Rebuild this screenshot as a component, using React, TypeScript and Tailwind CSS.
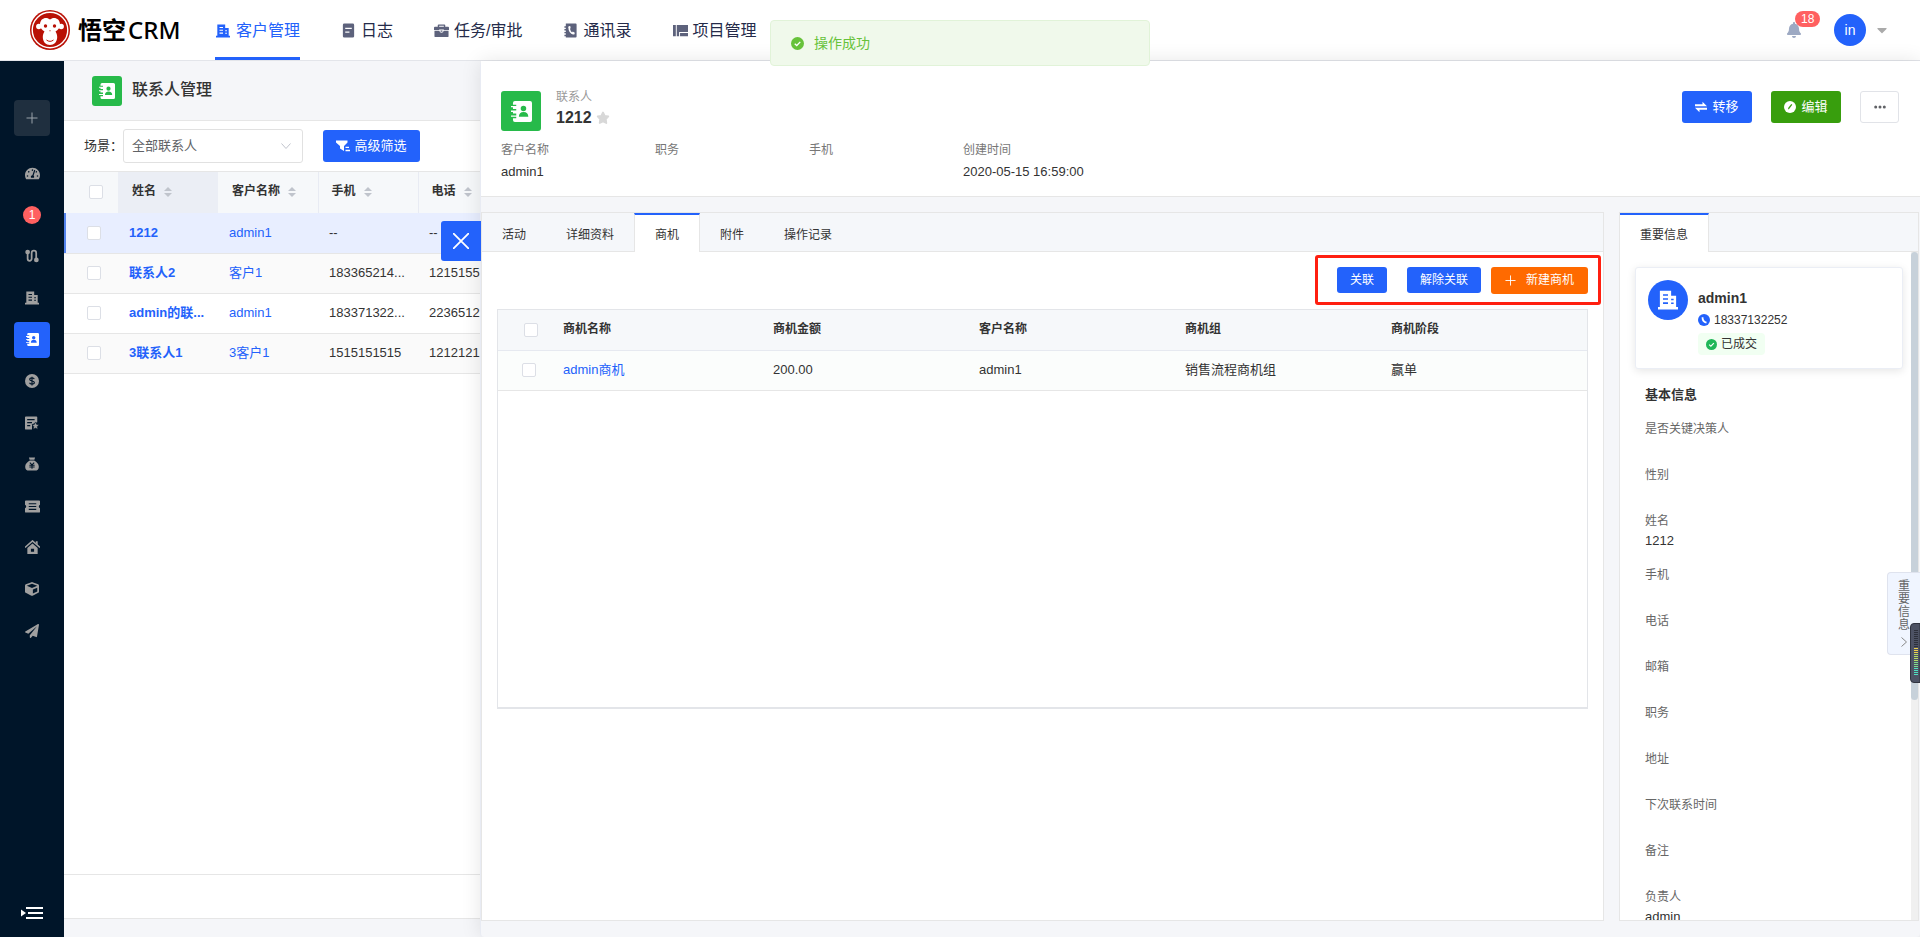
import { useState } from 'react'
import type { ReactNode } from 'react'
import { FaBell, FaCaretDown, FaCube, FaPaperPlane, FaTachometerAlt } from 'react-icons/fa'

type IconProps = { className?: string }

const checkboxClass =
  'block size-[14px] appearance-none rounded-[2px] border border-[#dcdfe6] bg-white checked:border-[#2362fb] checked:bg-[#2362fb]'

function BuildingIcon({ className }: IconProps) {
  return (
    <svg viewBox="0 0 16 16" className={className} fill="currentColor" aria-hidden="true">
      <path
        fillRule="evenodd"
        d="M1.500 0.500h9v4h4v9H16V15.500H0v-2h1.500zM4 3.300v1.300h4V3.300zm0 3.200v1.300h4V6.500zM4 9.800v1.300h4V9.800zm6.500-2.800v1.200h2V7zm0 3v1.200h2V10z"
      />
    </svg>
  )
}

function ContactIcon({ className }: IconProps) {
  return (
    <svg viewBox="0 0 16 16" className={className} fill="currentColor" aria-hidden="true">
      <path
        fillRule="evenodd"
        d="M3 0h11.500A1.500 1.500 0 0 1 16 1.500v13a1.500 1.500 0 0 1-1.500 1.500H3a1.500 1.500 0 0 1-1.500-1.500V13.200H4V12H0v-1h4V9.600H1.500V8.300H0v-1h4V6H1.500V4.800H0v-1h4V2.800H1.500V1.500A1.500 1.500 0 0 1 3 0zm6.500 3.600a2.100 2.100 0 1 0 0 4.200 2.100 2.100 0 0 0 0-4.200zM6 12h7.200c0-2.200-1.300-3.600-3.600-3.600S6 9.800 6 12z"
      />
    </svg>
  )
}

function LogIcon({ className }: IconProps) {
  return (
    <svg viewBox="0 0 16 16" className={className} fill="currentColor" aria-hidden="true">
      <path
        fillRule="evenodd"
        d="M3.500.5h9A1.500 1.500 0 0 1 14 2v12a1.500 1.500 0 0 1-1.500 1.500h-9A1.500 1.500 0 0 1 2 14V2A1.500 1.500 0 0 1 3.500.5zM4.500 5v1.400h7V5zm0 4v1.400h4.500V9z"
      />
    </svg>
  )
}

function BriefcaseIcon({ className }: IconProps) {
  return (
    <svg viewBox="0 0 16 16" className={className} fill="currentColor" aria-hidden="true">
      <path
        fillRule="evenodd"
        d="M5 1.500h6a1 1 0 0 1 1 1V4h3a1 1 0 0 1 1 1v2.500h-5.500V7h-5v.5H0V5a1 1 0 0 1 1-1h3V2.500a1 1 0 0 1 1-1zM5.500 3v1h5V3zM.5 8.300h5.200A2.500 2.500 0 0 0 8 10.500a2.500 2.500 0 0 0 2.300-2.200h5.200V14a1 1 0 0 1-1 1h-13a1 1 0 0 1-1-1zM7 8h2v1.300H7z"
      />
    </svg>
  )
}

function PhoneBookIcon({ className }: IconProps) {
  return (
    <svg viewBox="0 0 16 16" className={className} aria-hidden="true">
      <path
        fill="currentColor"
        d="M3 .5h10.500a1 1 0 0 1 1 1v13a1 1 0 0 1-1 1H3V14H1.500v-1.500H3V11H1.500V9.500H3V8H1.500V6.500H3V5H1.500V3.500H3z"
      />
      <path d="M6.500 4.200c0 4.300 1.500 6.600 5 7.600" stroke="white" strokeWidth="1.600" fill="none" />
      <path d="M5.800 3.500l1.900-.3.500 2.500-1.700.6zM9.500 10.300l.9-1.300 2.200 1.300-.5 1.900z" fill="white" />
    </svg>
  )
}

function ProjectIcon({ className }: IconProps) {
  return (
    <svg viewBox="0 0 16 16" className={className} fill="currentColor" aria-hidden="true">
      <path d="M0 2h3v12H0zM4 2h12v7.500H6.500V14H4zM7.500 10.700H16V14H7.500z" />
    </svg>
  )
}

function RouteIcon({ className }: IconProps) {
  return (
    <svg viewBox="0 0 16 16" className={className} aria-hidden="true">
      <path
        d="M3 4v7.200a2.300 2.300 0 0 0 4.600 0V4.500a2.600 2.600 0 0 1 5.200 0V12"
        fill="none"
        stroke="currentColor"
        strokeWidth="2"
      />
      <circle cx="3" cy="3.500" r="2.700" fill="currentColor" />
      <circle cx="13" cy="12.500" r="2.700" fill="currentColor" />
    </svg>
  )
}

function CoinIcon({ className }: IconProps) {
  return (
    <svg viewBox="0 0 16 16" className={className} aria-hidden="true">
      <circle cx="8" cy="8" r="8" fill="currentColor" />
      <path
        d="M10.600 5.800C10.300 4.900 9.300 4.500 8 4.500c-1.500 0-2.600.6-2.600 1.700C5.400 8.600 10.700 7.400 10.700 9.800c0 1.100-1.200 1.700-2.700 1.700s-2.500-.5-2.800-1.500M8 3v10"
        fill="none"
        stroke="#001529"
        strokeWidth="1.300"
      />
    </svg>
  )
}

function DocStarIcon({ className }: IconProps) {
  return (
    <svg viewBox="0 0 16 16" className={className} aria-hidden="true">
      <path d="M1 .5h12a1 1 0 0 1 1 1V7L8 9.500V15.500H1a1 1 0 0 1-1-1v-13a1 1 0 0 1 1-1z" fill="currentColor" />
      <path d="M2.500 4.200h8.500M2.500 7.500h5.500M2.500 11h3.500" stroke="#001529" strokeWidth="1.300" />
      <path
        d="M12 6.800l1.300 2.800 2.700.4-2 2 .5 3.200-2.500-1.400-2.500 1.400.5-3.200-2-2 2.700-.4z"
        fill="currentColor"
        stroke="#001529"
        strokeWidth="0.600"
      />
    </svg>
  )
}

function MoneyBagIcon({ className }: IconProps) {
  return (
    <svg viewBox="0 0 16 16" className={className} aria-hidden="true">
      <path
        d="M4.500.5h7l-.8 2.700H5.300zM5.500 4h5c3 1.700 5.300 4.200 5.300 7 0 3-1.800 4.500-4.300 4.500H4.500C2 15.500.2 14 .2 11c0-2.800 2.300-5.300 5.300-7z"
        fill="currentColor"
      />
      <path d="M5.500 6.500L8 9l2.500-2.500M8 9v4.500M5 9.500h6M5 11.500h6" fill="none" stroke="#001529" strokeWidth="1.200" />
    </svg>
  )
}

function TicketIcon({ className }: IconProps) {
  return (
    <svg viewBox="0 0 16 16" className={className} aria-hidden="true">
      <path
        d="M1 1.500h14a1 1 0 0 1 1 1v3.700a1.900 1.900 0 0 0 0 3.600v3.700a1 1 0 0 1-1 1H1a1 1 0 0 1-1-1V9.800a1.900 1.900 0 0 0 0-3.600V2.500a1 1 0 0 1 1-1z"
        fill="currentColor"
      />
      <path d="M4 5h8M4 8h8M4 11h8" stroke="#001529" strokeWidth="1.200" />
    </svg>
  )
}

function HomeIcon({ className }: IconProps) {
  return (
    <svg viewBox="0 0 16 16" className={className} aria-hidden="true">
      <path d="M0 8L8 1l8 7" fill="none" stroke="currentColor" strokeWidth="1.700" />
      <path d="M11.500 1.200h2V5l-2-1.700z" fill="currentColor" />
      <path
        fillRule="evenodd"
        d="M8 3.800l5.500 4.800V15h-11V8.600zM6.300 9.300v3.200h3.400V9.300z"
        fill="currentColor"
      />
    </svg>
  )
}

function TransferIcon({ className }: IconProps) {
  return (
    <svg viewBox="0 0 12 12" className={className} fill="currentColor" aria-hidden="true">
      <path d="M0 3.200h7.500V.8L12 5.200H0zM12 8.800H4.500v2.400L0 6.800h12z" />
    </svg>
  )
}

function StarIcon({ className }: IconProps) {
  return (
    <svg viewBox="0 0 14 14" className={className} aria-hidden="true">
      <path
        d="M7 1.500l1.700 3.300 3.600.6-2.500 2.700.5 3.900L7 10.500 3.700 12l.5-3.900L1.700 5.400l3.600-.6z"
        fill="currentColor"
        stroke="currentColor"
        strokeWidth="1.800"
        strokeLinejoin="round"
      />
    </svg>
  )
}

function PlusIcon({ className }: IconProps) {
  return (
    <svg viewBox="0 0 12 12" className={className} fill="none" stroke="currentColor" aria-hidden="true">
      <path d="M6 .5v11M.5 6h11" />
    </svg>
  )
}

function CheckCircle({ className }: IconProps) {
  return (
    <svg viewBox="0 0 14 14" className={className} aria-hidden="true">
      <circle cx="7" cy="7" r="7" fill="currentColor" />
      <path d="M4 7.200l2.200 2L10 5.200" fill="none" stroke="white" strokeWidth="1.400" />
    </svg>
  )
}

function MonkeyLogo() {
  return (
    <svg viewBox="0 0 40 40" className="size-10" aria-hidden="true">
      <circle cx="20" cy="20" r="20" fill="#b91106" />
      <circle cx="20" cy="20" r="17.800" fill="none" stroke="white" strokeWidth="1.400" />
      <circle cx="8.800" cy="16.500" r="2.700" fill="white" />
      <circle cx="31.200" cy="16.500" r="2.700" fill="white" />
      <path
        d="M20 9.500C17 6.500 10 7.500 10 14.500c0 3.500 2 5.500 4.500 7-1 1.500-1.700 3.500-1.700 5.500 0 5 3.200 8 7.200 8s7.200-3 7.200-8c0-2-.7-4-1.700-5.500 2.500-1.500 4.500-3.500 4.500-7C30 7.500 23 6.500 20 9.500z"
        fill="white"
      />
      <circle cx="15.500" cy="16" r="1.700" fill="#b91106" />
      <circle cx="24.500" cy="16" r="1.700" fill="#b91106" />
      <path d="M19 20.500h2l-1 1z" fill="#b91106" />
      <path d="M16.500 30c2 1.800 5 1.800 7 0" fill="none" stroke="#b91106" strokeWidth="1" />
    </svg>
  )
}

const navItems = [
  { label: '客户管理', icon: <BuildingIcon className="size-[14px]" />, active: true },
  { label: '日志', icon: <LogIcon className="size-[15px]" /> },
  { label: '任务/审批', icon: <BriefcaseIcon className="size-[15px]" /> },
  { label: '通讯录', icon: <PhoneBookIcon className="size-[15px]" /> },
  { label: '项目管理', icon: <ProjectIcon className="size-[15px]" /> },
]

function Header() {
  return (
    <header className="flex h-[61px] shrink-0 items-center border-b border-[#e3e5ea] bg-white">
      <a href="#" className="ml-[30px] flex w-[185px] items-center gap-2 text-black">
        <MonkeyLogo />
        <span className="flex items-center gap-[2px] font-['Noto_Sans','Noto_Sans_CJK_SC',sans-serif] text-2xl leading-8 font-medium">
          <b>悟空</b>CRM
        </span>
      </a>
      <nav className="flex h-full gap-[41px] text-base">
        {navItems.map((item) => (
          <a
            key={item.label}
            href="#"
            className={
              item.active
                ? 'flex items-center gap-[5px] border-b-[3px] border-[#2362fb] pt-1 text-[#2362fb]'
                : 'flex items-center gap-[5px] border-b-[3px] border-transparent pt-1 text-[#252b4a]'
            }
          >
            <span className={item.active ? 'flex w-4 justify-center' : 'text-[#5d627c]'}>{item.icon}</span>
            {item.label}
          </a>
        ))}
      </nav>
      <div className="ml-auto flex items-center pr-[30px]">
        <button type="button" aria-label="消息" className="relative mr-8 text-[#9da9c3]">
          <FaBell className="size-4" />
          <span className="absolute -top-[11px] left-[9px] rounded-full bg-[#ff6060] px-[6px] text-xs leading-4 text-white">
            18
          </span>
        </button>
        <button type="button" className="flex items-center gap-2">
          <span className="flex size-8 items-center justify-center rounded-full bg-[#2362fb] text-sm text-white">in</span>
          <FaCaretDown className="size-4 text-[#aaaaaa]" />
        </button>
      </div>
    </header>
  )
}

const sideItems: { label: string; icon: ReactNode; active?: boolean }[] = [
  { label: '仪表盘', icon: <FaTachometerAlt className="size-[15px]" /> },
  {
    label: '待办事项',
    icon: (
      <span className="flex size-[18px] items-center justify-center rounded-full bg-[#ff6060] text-xs text-white">1</span>
    ),
  },
  { label: '线索', icon: <RouteIcon className="size-[14px]" /> },
  { label: '客户', icon: <BuildingIcon className="size-[14px]" /> },
  { label: '联系人', icon: <ContactIcon className="size-[13px]" />, active: true },
  { label: '商机', icon: <CoinIcon className="size-[14px]" /> },
  { label: '合同', icon: <DocStarIcon className="size-[14px]" /> },
  { label: '回款', icon: <MoneyBagIcon className="size-[14px]" /> },
  { label: '发票', icon: <TicketIcon className="size-[15px]" /> },
  { label: '公海', icon: <HomeIcon className="size-[15px]" /> },
  { label: '产品', icon: <FaCube className="size-[14px]" /> },
  { label: '营销', icon: <FaPaperPlane className="size-[14px]" /> },
]

function Sidebar() {
  return (
    <aside className="flex w-16 shrink-0 flex-col items-center bg-[#001529] pt-[39px] text-[#a0a0a0]">
      <button
        type="button"
        aria-label="新建"
        className="flex size-9 items-center justify-center rounded bg-[#1f2f3f] text-[#9aa3ab]"
      >
        <PlusIcon className="size-3" />
      </button>
      <nav className="mt-[19px] flex h-[494px] flex-col justify-between">
        {sideItems.map((item) => (
          <a
            key={item.label}
            href="#"
            aria-label={item.label}
            className={
              item.active
                ? 'flex size-9 items-center justify-center rounded bg-[#2362fb] text-white'
                : 'flex size-9 items-center justify-center rounded'
            }
          >
            {item.icon}
          </a>
        ))}
      </nav>
      <button type="button" aria-label="展开菜单" className="mt-auto mb-[17px] text-white">
        <svg viewBox="0 0 22 14" className="h-[14px] w-[22px]" aria-hidden="true">
          <path d="M0 3.500L5 7l-5 3.500z" fill="currentColor" />
          <path d="M5 2h17M7 7h15M5 12h17" stroke="currentColor" strokeWidth="2" />
        </svg>
      </button>
    </aside>
  )
}

function SortIcon() {
  return (
    <svg viewBox="0 0 8 10" className="ml-2 inline-block h-[10px] w-2 fill-[#c0c4cc]" aria-hidden="true">
      <path d="M4 0l4 4H0zM0 6h8l-4 4z" />
    </svg>
  )
}

const contacts = [
  { name: '1212', customer: 'admin1', mobile: '--', phone: '--' },
  { name: '联系人2', customer: '客户1', mobile: '183365214...', phone: '1215155' },
  { name: 'admin的联...', customer: 'admin1', mobile: '183371322...', phone: '2236512' },
  { name: '3联系人1', customer: '3客户1', mobile: '1515151515', phone: '1212121' },
]

function ContactList() {
  return (
    <section className="flex w-[416px] shrink-0 flex-col overflow-hidden bg-[#f5f6f9] pb-[18px]">
      <div className="flex h-[60px] shrink-0 items-center gap-[10px] border-b border-[#e6e6e6] pl-7">
        <span className="flex size-[30px] items-center justify-center rounded-[3px] bg-[#27ba4a] text-white">
          <ContactIcon className="size-4" />
        </span>
        <h1 className="pb-[2px] text-base font-medium text-[#333]">联系人管理</h1>
      </div>
      <div className="flex min-h-0 flex-1 flex-col border-b border-[#e6e6e6] bg-white">
        <div className="flex h-[51px] shrink-0 items-center border-b border-[#e6e6e6] pl-5">
          <label htmlFor="scene" className="w-[39px] whitespace-nowrap text-[13px] text-[#333]">
            场景：
          </label>
          <div className="relative">
            <select
              id="scene"
              className="h-[34px] w-[180px] appearance-none rounded-[3px] border border-[#e1e1e1] bg-white pl-2 text-[13px] text-[#606266]"
            >
              <option>全部联系人</option>
            </select>
            <svg
              viewBox="0 0 10 6"
              className="pointer-events-none absolute top-[14px] right-3 h-[6px] w-[10px] fill-none stroke-[#c0c4cc]"
              aria-hidden="true"
            >
              <path d="M.5.500L5 5.500 9.500.500" />
            </svg>
          </div>
          <button
            type="button"
            className="ml-5 flex h-8 w-[97px] items-center justify-center gap-1 rounded-[3px] bg-[#2362fb] text-[13px] text-white"
          >
            <svg viewBox="0 0 14 12" className="h-3 w-[14px]" fill="currentColor" aria-hidden="true">
              <path d="M0 .5h11.500v2L8 6v5L4 8.500V6L0 2.500zM9.500 6.800H13V8H9.500zM9.500 9.800H14V11.200H9.500z" />
            </svg>
            高级筛选
          </button>
        </div>
        <table className="w-[455px] shrink-0 table-fixed border-collapse text-left text-[13px] text-[#333]">
          <thead>
            <tr className="h-[41px] bg-[#f6f8fa] text-xs">
              <th className="w-[54px] pb-[2px] pl-[25px]">
                <input type="checkbox" aria-label="全选联系人" className={checkboxClass} />
              </th>
              <th className="w-[100px] bg-[#ebeef5] pb-[3px] pl-[14px]">
                姓名
                <SortIcon />
              </th>
              <th className="w-[100px] border-r border-[#e8ebf3] pb-[3px] pl-[14px]">
                客户名称
                <SortIcon />
              </th>
              <th className="w-[100px] border-r border-[#e8ebf3] pb-[3px] pl-[13px]">
                手机
                <SortIcon />
              </th>
              <th className="w-[101px] pb-[3px] pl-[13px]">
                电话
                <SortIcon />
              </th>
            </tr>
          </thead>
          <tbody>
            {contacts.map((row, i) => (
              <tr
                key={row.name}
                className={
                  i === 0
                    ? 'h-10 border-b border-[#e6e6e6] bg-[#e8eeff]'
                    : i % 2
                      ? 'h-10 border-b border-[#e6e6e6] bg-[#fafafa]'
                      : 'h-10 border-b border-[#e6e6e6]'
                }
              >
                <td className={i === 0 ? 'pl-[23px] shadow-[inset_2px_0_0_#5383ed]' : 'pl-[23px]'}>
                  <input type="checkbox" aria-label={'选择' + row.name} className={checkboxClass} />
                </td>
                <td className="pl-[11px] whitespace-nowrap">
                  <a href="#" className="font-bold text-[#2362fb]">
                    {row.name}
                  </a>
                </td>
                <td className="pl-[11px]">
                  <a href="#" className="text-[#2362fb]">
                    {row.customer}
                  </a>
                </td>
                <td className="pl-[11px]">{row.mobile}</td>
                <td className="pl-[11px]">{row.phone}</td>
              </tr>
            ))}
          </tbody>
        </table>
        <div className="mt-auto h-11 border-t border-[#e6e6e6]" />
      </div>
    </section>
  )
}

const summary = [
  { label: '客户名称', value: 'admin1' },
  { label: '职务', value: '' },
  { label: '手机', value: '' },
  { label: '创建时间', value: '2020-05-15 16:59:00' },
]

function DetailHeader() {
  return (
    <div className="h-[136px] shrink-0 border-b border-[#e6e6e6] bg-white pt-[30px] pr-[21px] pl-5">
      <div className="flex items-start">
        <span className="flex size-10 items-center justify-center rounded-[3px] bg-[#27ba4a] text-white">
          <ContactIcon className="size-[21px]" />
        </span>
        <div className="ml-[15px]">
          <p className="text-xs leading-3 text-[#999]">联系人</p>
          <h2 className="mt-[5px] flex items-center gap-1 text-base leading-5 font-bold text-[#333]">
            1212
            <StarIcon className="size-[14px] text-[#d8d8d8]" />
          </h2>
        </div>
        <div className="ml-auto flex gap-[19px] text-[13px] text-white">
          <button type="button" className="flex h-8 w-[70px] items-center justify-center gap-[5px] rounded-[3px] bg-[#2362fb]">
            <TransferIcon className="size-3" />
            转移
          </button>
          <button type="button" className="flex h-8 w-[70px] items-center justify-center gap-[5px] rounded-[3px] bg-[#389e0d]">
            <svg viewBox="0 0 12 12" className="size-3" aria-hidden="true">
              <circle cx="6" cy="6" r="6" fill="white" />
              <path d="M4 8.500l.3-1.800L7.300 3l1 .8-3 3.900z" fill="#389e0d" />
            </svg>
            编辑
          </button>
          <button
            type="button"
            aria-label="更多"
            className="flex h-8 w-[39px] items-center justify-center rounded-[3px] border border-[#e1e3e8] bg-white text-[#606266]"
          >
            <svg viewBox="0 0 12 4" className="h-1 w-3" fill="currentColor" aria-hidden="true">
              <circle cx="1.700" cy="2" r="1.500" />
              <circle cx="6" cy="2" r="1.500" />
              <circle cx="10.300" cy="2" r="1.500" />
            </svg>
          </button>
        </div>
      </div>
      <dl className="mt-[11px] flex">
        {summary.map((item) => (
          <div key={item.label} className="w-[154px]">
            <dt className="text-xs leading-4 text-[#777]">{item.label}</dt>
            <dd className="mt-1 text-[13px] leading-5 whitespace-nowrap text-[#333]">{item.value}</dd>
          </div>
        ))}
      </dl>
    </div>
  )
}

const tabs = ['活动', '详细资料', '商机', '附件', '操作记录']

function BusinessPanel() {
  const [current, setCurrent] = useState('商机')

  return (
    <section className="flex min-w-0 flex-1 flex-col border border-[#e6e6e6] bg-white">
      <div role="tablist" className="flex h-[39px] shrink-0 bg-[#f5f7fa] text-xs text-[#333]">
        {tabs.map((tab) => (
          <button
            key={tab}
            type="button"
            role="tab"
            aria-selected={tab === current}
            onClick={() => setCurrent(tab)}
            className={
              tab === current
                ? 'border-x border-t-2 border-x-[#e6e6e6] border-t-[#2362fb] bg-white px-5 pt-[3px]'
                : 'border-b border-[#e6e6e6] px-5 pt-[5px]'
            }
          >
            {tab}
          </button>
        ))}
        <span className="flex-1 border-b border-[#e6e6e6]" />
      </div>
      <div className="mt-[3px] mr-[2px] flex h-[50px] w-[286px] shrink-0 items-center self-end rounded-[3px] border-[3px] border-[#ff1f10] pl-[19px] text-xs text-white">
        <button type="button" className="h-[26px] w-[50px] rounded-[3px] bg-[#2362fb]">
          关联
        </button>
        <button type="button" className="ml-5 h-[26px] w-[74px] rounded-[3px] bg-[#2362fb]">
          解除关联
        </button>
        <button
          type="button"
          className="ml-[10px] flex h-[27px] w-[97px] items-center justify-center gap-[10px] rounded-[3px] bg-[#ff6a00]"
        >
          <PlusIcon className="size-[11px]" />
          新建商机
        </button>
      </div>
      <div className="mx-[15px] mt-1 h-[400px] shrink-0 border border-b-2 border-[#e3e5e9]">
        <table className="w-full table-fixed border-collapse text-left text-[13px] text-[#333]">
          <thead>
            <tr className="h-10 border-b border-[#e6e9f0] bg-[#f6f8fa] text-xs">
              <th className="w-[55px] pl-[26px]">
                <input type="checkbox" aria-label="全选商机" className={checkboxClass} />
              </th>
              <th className="w-[210px] pb-[2px] pl-[10px]">商机名称</th>
              <th className="pb-[2px] pl-[10px]">商机金额</th>
              <th className="pb-[2px] pl-[10px]">客户名称</th>
              <th className="pb-[2px] pl-[10px]">商机组</th>
              <th className="pb-[2px] pl-[10px]">商机阶段</th>
            </tr>
          </thead>
          <tbody>
            <tr className="h-10 border-b border-[#e6e6e6] bg-[#fbfdfc]">
              <td className="pl-6">
                <input type="checkbox" aria-label="选择admin商机" className={checkboxClass} />
              </td>
              <td className="pl-[10px]">
                <a href="#" className="text-[#2362fb]">
                  admin商机
                </a>
              </td>
              <td className="pl-[10px]">200.00</td>
              <td className="pl-[10px]">admin1</td>
              <td className="pl-[10px]">销售流程商机组</td>
              <td className="pl-[10px]">赢单</td>
            </tr>
          </tbody>
        </table>
      </div>
    </section>
  )
}

const baseInfo = [
  { label: '是否关键决策人' },
  { label: '性别' },
  { label: '姓名', value: '1212' },
  { label: '手机' },
  { label: '电话' },
  { label: '邮箱' },
  { label: '职务' },
  { label: '地址' },
  { label: '下次联系时间' },
  { label: '备注' },
  { label: '负责人', value: 'admin' },
]

function ImportantInfo() {
  return (
    <section className="flex w-[300px] shrink-0 flex-col border border-[#e6e6e6] bg-white">
      <div className="flex h-[39px] shrink-0 bg-[#f5f7fa] text-xs text-[#333]">
        <h3 className="flex w-[89px] items-center border-t-2 border-r border-t-[#2362fb] border-r-[#e6e6e6] bg-white pt-[2px] pl-5">
          重要信息
        </h3>
        <span className="flex-1 border-b border-[#e6e6e6]" />
      </div>
      <div className="flex min-h-0 flex-1">
        <div className="min-w-0 flex-1 overflow-hidden pt-[15px] pr-2 pl-[15px]">
          <div className="flex h-[102px] rounded-[3px] border border-[#ebeef5] bg-white pt-3 pl-3 shadow-[0_2px_8px_rgba(0,0,0,0.1)]">
            <span className="flex size-10 items-center justify-center rounded-full bg-[#2362fb] text-white">
              <BuildingIcon className="size-5" />
            </span>
            <div className="ml-[10px] pt-2 text-[#333]">
              <p className="text-sm leading-5 font-bold">admin1</p>
              <p className="mt-1 flex items-center gap-1 text-xs leading-4">
                <svg viewBox="0 0 12 12" className="size-3" aria-hidden="true">
                  <circle cx="6" cy="6" r="6" fill="#2362fb" />
                  <path d="M4.500 3.200c0 3 1.200 4.800 4 5.400" fill="none" stroke="white" strokeWidth="1.800" />
                </svg>
                18337132252
              </p>
              <p className="mt-[5px] flex h-[22px] w-[67px] items-center justify-center gap-1 rounded bg-[#f1fff2] text-xs">
                <CheckCircle className="size-[11px] text-[#20b759]" />
                已成交
              </p>
            </div>
          </div>
          <h4 className="mt-4 pl-[10px] text-[13px] leading-5 font-bold text-[#333]">基本信息</h4>
          <dl className="mt-4 pl-[10px]">
            {baseInfo.map((item) => (
              <div key={item.label} className={item.value ? 'h-[54px]' : 'h-[46px]'}>
                <dt className="text-xs leading-4 text-[#666]">{item.label}</dt>
                <dd className="mt-[2px] text-[13px] leading-5 text-[#333]">{item.value}</dd>
              </div>
            ))}
          </dl>
        </div>
        <div className="w-[7px] bg-[#f0f0f0]">
          <div className="h-[67%] rounded-full bg-[#c7d1da]" />
        </div>
      </div>
    </section>
  )
}

function MeterWidget() {
  return (
    <svg viewBox="0 0 10 60" className="fixed top-[623px] right-0 z-40 h-[60px] w-[10px]" aria-hidden="true">
      <path d="M10 .5H4A3.500 3.500 0 0 0 .500 4v52A3.500 3.500 0 0 0 4 59.500h6z" fill="#4d5264" stroke="#30333f" />
      {Array.from({ length: 23 }, (_, i) => (
        <rect
          key={i}
          x="4"
          y={7 + i * 2}
          width="4"
          height="1"
          fill={i < 9 ? '#2d303b' : i < 12 ? '#f0d24b' : i < 16 ? '#b5dc63' : i < 19 ? '#7fdc8a' : '#4fe0c0'}
        />
      ))}
    </svg>
  )
}

function DetailDrawer() {
  return (
    <div className="relative z-10 flex min-w-0 flex-1 flex-col rounded-sm border-l border-[#e8ebf3] bg-[#f5f6f9] shadow-[0_0_20px_rgba(0,0,0,0.1)]">
      <button
        type="button"
        aria-label="关闭"
        className="absolute top-[160px] -left-10 flex size-10 items-center justify-center rounded-l-[3px] bg-[#2362fb] text-white"
      >
        <svg viewBox="0 0 16 16" className="size-4" fill="none" stroke="currentColor" strokeWidth="1.800" aria-hidden="true">
          <path d="M0 0l16 16M16 0L0 16" />
        </svg>
      </button>
      <DetailHeader />
      <div className="flex min-h-0 flex-1 gap-[15px] pt-[15px] pr-px pb-4">
        <BusinessPanel />
        <ImportantInfo />
      </div>
      <button
        type="button"
        className="absolute top-[511px] right-0 flex h-[83px] w-[33px] flex-col items-center rounded-l border border-r-0 border-[#dfe3ee] bg-[#f0f5ff] pt-[7px] text-xs leading-[13px] text-[#666]"
      >
        <span className="w-3">重要信息</span>
        <svg viewBox="0 0 6 10" className="mt-[5px] h-[10px] w-[6px] fill-none stroke-[#888]" aria-hidden="true">
          <path d="M.5.500L5.500 5 .5 9.500" />
        </svg>
      </button>
    </div>
  )
}

export default function App() {
  return (
    <div className="flex h-screen flex-col overflow-hidden bg-[#f5f6f9] font-['Liberation_Sans','Noto_Sans_CJK_SC',sans-serif]">
      <Header />
      <main className="flex min-h-0 flex-1">
        <Sidebar />
        <ContactList />
        <DetailDrawer />
      </main>
      <div
        role="status"
        className="fixed top-5 left-1/2 z-50 flex h-[46px] w-[380px] -translate-x-1/2 items-center gap-[10px] rounded border border-[#e1f3d8] bg-[#f0f9eb] pl-[20px] text-sm text-[#67c23a]"
      >
        <CheckCircle className="size-[13px]" />
        操作成功
      </div>
      <MeterWidget />
    </div>
  )
}
